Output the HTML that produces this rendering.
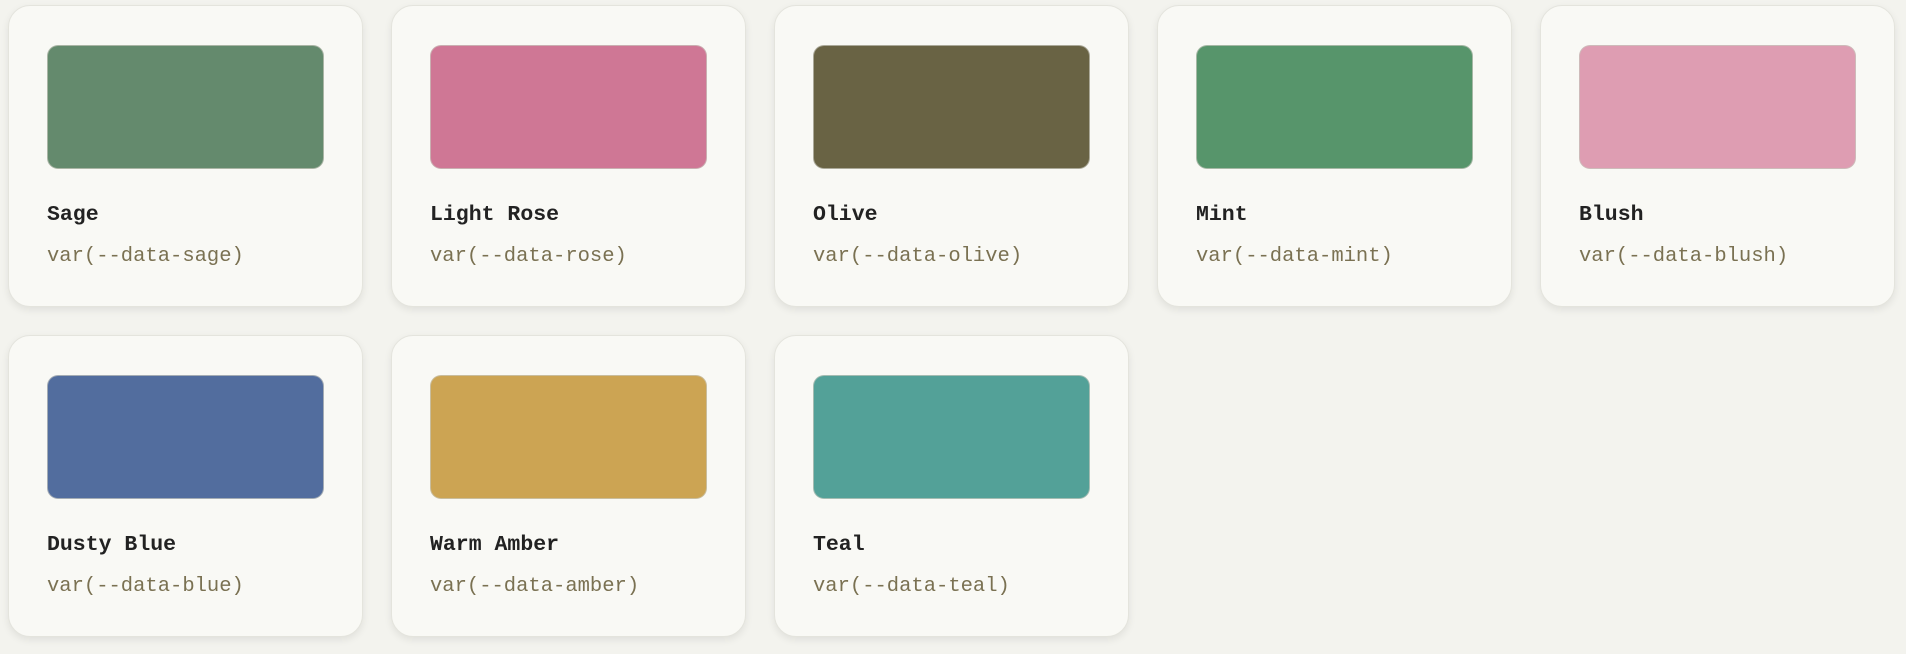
<!DOCTYPE html>
<html><head><style>
body{margin:0;width:1906px;height:654px;background:#f3f3ee;overflow:hidden;font-family:"Liberation Mono","DejaVu Sans Mono",monospace}
.c{position:absolute;width:355px;height:302px;background:#f9f9f5;border:1px solid #e4e4dd;border-radius:22px;box-sizing:border-box;box-shadow:0 3px 8px rgba(0,0,0,0.08)}
.s{position:absolute;left:38px;top:39px;width:277px;height:124px;border-radius:11px;border:1px solid rgba(200,200,190,0.7);box-sizing:border-box}
.n{position:absolute;left:38px;top:196px;font-size:21.5px;font-weight:bold;color:#222;line-height:26px}
.v{position:absolute;left:38px;top:238px;font-size:20.5px;color:#7a7152;line-height:26px}
</style></head><body>
<div class="c" style="left:8px;top:5px"><div class="s" style="background:#648a6d"></div><div class="n">Sage</div><div class="v">var(--data-sage)</div></div>
<div class="c" style="left:391px;top:5px"><div class="s" style="background:#cf7795"></div><div class="n">Light Rose</div><div class="v">var(--data-rose)</div></div>
<div class="c" style="left:774px;top:5px"><div class="s" style="background:#696344"></div><div class="n">Olive</div><div class="v">var(--data-olive)</div></div>
<div class="c" style="left:1157px;top:5px"><div class="s" style="background:#57956b"></div><div class="n">Mint</div><div class="v">var(--data-mint)</div></div>
<div class="c" style="left:1540px;top:5px"><div class="s" style="background:#de9db2"></div><div class="n">Blush</div><div class="v">var(--data-blush)</div></div>
<div class="c" style="left:8px;top:335px"><div class="s" style="background:#526d9e"></div><div class="n">Dusty Blue</div><div class="v">var(--data-blue)</div></div>
<div class="c" style="left:391px;top:335px"><div class="s" style="background:#cca453"></div><div class="n">Warm Amber</div><div class="v">var(--data-amber)</div></div>
<div class="c" style="left:774px;top:335px"><div class="s" style="background:#53a198"></div><div class="n">Teal</div><div class="v">var(--data-teal)</div></div>
</body></html>
